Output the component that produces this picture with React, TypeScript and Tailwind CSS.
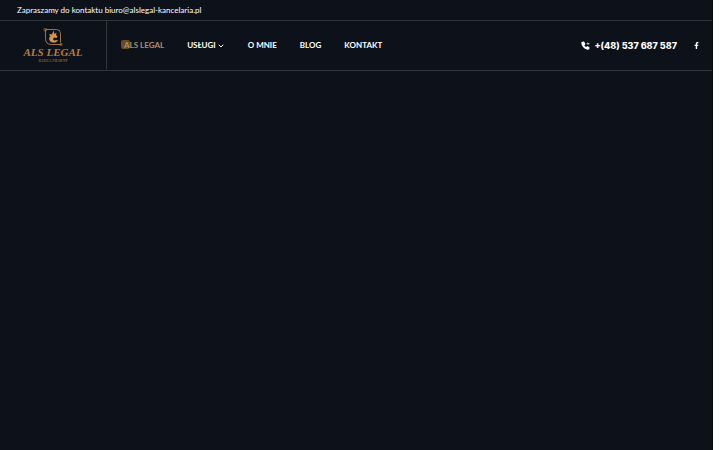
import { ChevronDown } from 'lucide-react'
import { FaFacebookF } from 'react-icons/fa'

const links = [
  { label: 'ALS LEGAL', href: '#als-legal', active: true },
  { label: 'USŁUGI', href: '#uslugi', hasMenu: true },
  { label: 'O MNIE', href: '#o-mnie' },
  { label: 'BLOG', href: '#blog' },
  { label: 'KONTAKT', href: '#kontakt' },
]

function Logo() {
  return (
    <a href="#home" className="flex flex-col items-center font-['Liberation_Serif',serif] text-[#b87b3c]">
      <svg viewBox="0 0 40 36" className="h-[18px] w-5" fill="none" aria-hidden="true">
        <path
          d="M5 3h22q8 0 8 8v18M5 3v18q0 12 12 12h20"
          stroke="#a9814f"
          strokeWidth="1.8"
        />
        <path d="M2 1h5v5H2zM34 31h4v4h-4z" stroke="#a9814f" strokeWidth="1" />
        <path
          d="M14 12l4 1 3-8 2 7 4-3-1 5 3 3-2 3-5-1-2 3 2 3 8-1c-2 6-12 7-16 2-3-4-2-8 1-10l-3-2z"
          fill="#d8964c"
        />
      </svg>
      <span className="text-[11px] leading-3 font-bold italic">ALS LEGAL</span>
      <span className="text-[4px] leading-[5px] italic">RADCA PRAWNY</span>
    </a>
  )
}

function NavItem({ label, href, active, hasMenu }: { label: string; href: string; active?: boolean; hasMenu?: boolean }) {
  return (
    <a
      href={href}
      className={`relative flex items-center gap-px whitespace-nowrap ${active ? 'text-[#b58b70]' : 'text-white'}`}
    >
      {active && <span className="absolute -top-px -left-[3px] size-[9px] rounded-xs bg-[#674b21]" />}
      <span className="relative">{label}</span>
      {hasMenu && <ChevronDown className="size-2" strokeWidth={3} />}
    </a>
  )
}

export default function App() {
  return (
    <div className="bg-white pr-[7px] font-['Lato',sans-serif]">
      <div className="flex min-h-screen flex-col border-r border-[#05080c] bg-[#0d121a] text-white">
        <div className="flex h-[21px] items-center border-b border-[#30353c] px-[17px] text-[8px]">
          <p>
            Zapraszamy do kontaktu <a href="mailto:biuro@alslegal-kancelaria.pl">biuro@alslegal-kancelaria.pl</a>
          </p>
        </div>

        <header className="flex h-[50px] border-b border-[#30353c]">
          <div className="flex w-[107px] shrink-0 items-center justify-center border-r border-[#30353c]">
            <Logo />
          </div>

          <nav className="flex items-center gap-[23px] pl-[17px] text-[8px] leading-[9px] font-bold">
            {links.map((link) => (
              <NavItem key={link.label} {...link} />
            ))}
          </nav>

          <div className="ml-auto flex items-center gap-4 pr-3">
            <a
              href="tel:+48537687587"
              className="flex items-center gap-1 font-['Inter',sans-serif] text-[9px] leading-3 font-extrabold whitespace-nowrap"
            >
              <svg viewBox="0 0 24 24" className="size-[9px]" fill="currentColor" aria-hidden="true">
                <path d="M3 2l5-1 4 7-3 3c1 3 3 4 5 5l3-3 6 4-1 5c-1 1-3 1-5 1C8 21 2 13 1 6c0-2 0-3 2-4z" />
                <path d="M15 7h6M18 4l3 3-3 3" fill="none" stroke="currentColor" strokeWidth="2" />
              </svg>
              +(48) 537 687 587
            </a>
            <a href="#facebook" aria-label="Facebook">
              <FaFacebookF className="size-[7px]" />
            </a>
          </div>
        </header>

        <main className="flex-1" />
      </div>
    </div>
  )
}
